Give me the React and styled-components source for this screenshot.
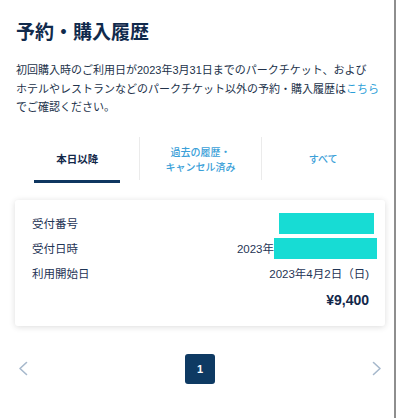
import React from "react";
import styled, { createGlobalStyle } from "styled-components";

const Global = createGlobalStyle`
  html, body { margin: 0; padding: 0; background: #fff; }
  body { font-family: "Liberation Sans", "Noto Sans CJK JP", sans-serif; }
`;

const Page = styled.div`
  width: 394px;
  min-height: 418px;
  border-right: 2px solid #8e8e8e;
  box-sizing: content-box;
  background: #fff;
  display: flex;
  flex-direction: column;
`;

const Title = styled.h1`
  margin: 18px 0 0 16px;
  font-family: "Noto Sans CJK JP", sans-serif;
  font-size: 19px;
  font-weight: 700;
  line-height: 26px;
  color: #102a4c;
`;

const Lead = styled.p`
  margin: 17px 0 0 16px;
  font-size: 11px;
  line-height: 18.5px;
  color: #22324a;
  white-space: nowrap;
`;

const Link = styled.span`
  color: #2a9ed8;
`;

const Tabs = styled.div`
  margin: 20px 10px 0 16px;
  display: grid;
  grid-template-columns: repeat(3, 1fr);
  height: 46px;
`;

const Tab = styled.div`
  position: relative;
  display: flex;
  align-items: center;
  justify-content: center;
  text-align: center;
  font-family: "Noto Sans CJK JP", sans-serif;
  font-size: ${(p) => (p.$active ? "10.5px" : "10px")};
  font-weight: ${(p) => (p.$active ? 700 : 500)};
  line-height: 14.5px;
  color: ${(p) => (p.$active ? "#13284a" : "#3aa0d8")};
  padding-top: 3px;
  border-left: ${(p) => (p.$first ? "none" : "1px solid #ebebeb")};
  margin-bottom: 3px;
  &::after {
    content: "";
    display: ${(p) => (p.$active ? "block" : "none")};
    position: absolute;
    left: 50%;
    transform: translateX(-50%);
    bottom: -3px;
    width: 86px;
    height: 3px;
    background: #0e3660;
  }
`;

const Card = styled.div`
  margin: 17px 9px 0 15px;
  background: #fff;
  border-radius: 3px;
  box-shadow: 0 1px 6px rgba(0, 0, 0, 0.14);
  padding: 11px 16px 12px 17px;
  display: flex;
  flex-direction: column;
`;

const Row = styled.div`
  display: flex;
  align-items: center;
  justify-content: space-between;
  height: ${(p) => p.$h || 25}px;
  font-size: 11.5px;
  color: #1f3556;
`;

const Label = styled.span`
  font-family: "Noto Sans CJK JP", sans-serif;
`;

const Value = styled.span`
  display: flex;
  align-items: center;
`;

const Mask = styled.span`
  display: inline-block;
  width: ${(p) => p.$w}px;
  height: 21px;
  background: #17dcd4;
  margin-right: ${(p) => p.$mr}px;
`;

const Price = styled.span`
  font-size: 14px;
  font-weight: 700;
  color: #13284a;
  margin-left: auto;
`;

const Pager = styled.div`
  margin: 28px 12px 0 18px;
  display: flex;
  align-items: center;
  justify-content: space-between;
  height: 30px;
`;

const PageNum = styled.div`
  width: 30px;
  height: 30px;
  border-radius: 3px;
  background: #0e3a63;
  color: #fff;
  font-size: 11px;
  font-weight: 700;
  display: flex;
  align-items: center;
  justify-content: center;
`;

const Arrow = ({ dir }) => (
  <svg width="10" height="15" viewBox="0 0 10 15" fill="none">
    <path
      d={dir === "left" ? "M8.5 1.5 L2 7.5 L8.5 13.5" : "M1.5 1.5 L8 7.5 L1.5 13.5"}
      stroke="#a6b8cc"
      strokeWidth="1.6"
      strokeLinecap="round"
      strokeLinejoin="round"
    />
  </svg>
);

export default function App() {
  return (
    <>
      <Global />
      <Page>
        <Title>予約・購入履歴</Title>
        <Lead>
          初回購入時のご利用日が2023年3月31日までのパークチケット、および
          <br />
          ホテルやレストランなどのパークチケット以外の予約・購入履歴は
          <Link>こちら</Link>
          <br />
          でご確認ください。
        </Lead>
        <Tabs>
          <Tab $active $first>本日以降</Tab>
          <Tab>
            過去の履歴・
            <br />
            キャンセル済み
          </Tab>
          <Tab>すべて</Tab>
        </Tabs>
        <Card>
          <Row $h={25}>
            <Label>受付番号</Label>
            <Value>
              <Mask $w={95} $mr={-5} />
            </Value>
          </Row>
          <Row $h={25}>
            <Label>受付日時</Label>
            <Value>
              2023年
              <Mask $w={103} $mr={-8} />
            </Value>
          </Row>
          <Row $h={25}>
            <Label>利用開始日</Label>
            <Value>2023年4月2日（日)</Value>
          </Row>
          <Row $h={28}>
            <Price>¥9,400</Price>
          </Row>
        </Card>
        <Pager>
          <Arrow dir="left" />
          <PageNum>1</PageNum>
          <Arrow dir="right" />
        </Pager>
      </Page>
    </>
  );
}
